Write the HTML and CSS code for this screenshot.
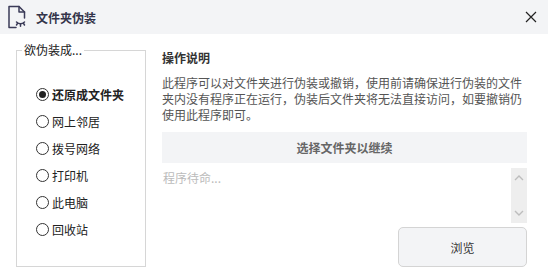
FILE: index.html
```html
<!DOCTYPE html>
<html lang="zh-CN">
<head>
<meta charset="utf-8">
<title>文件夹伪装</title>
<link rel="stylesheet" href="styles.css">
</head>
<body>
<div class="window">
  <div class="titlebar">
    <svg class="app-icon" width="20" height="24" viewBox="0 0 20 24" fill="none" stroke="#3b3b58" stroke-width="1.5" stroke-linejoin="round" stroke-linecap="round">
      <path d="M9 22.5 H2 V1.5 H12 L17.5 7 V13"/>
      <path d="M12 1.5 V7 H17.5"/>
      <path d="M9.5 17 Q13.5 20.5 17.5 17"/>
      <path d="M10.5 18.3 L9.5 20"/>
      <path d="M13.5 19.4 L13.5 21.2"/>
      <path d="M16.5 18.3 L17.5 20"/>
    </svg>
    <span class="title">文件夹伪装</span>
    <svg class="close" width="12" height="12" viewBox="0 0 12 12" stroke="#222" stroke-width="1.2">
      <path d="M1 1 L11 11 M11 1 L1 11"/>
    </svg>
  </div>
  <div class="content">
    <fieldset class="group">
      <legend>欲伪装成...</legend>
      <div class="options">
        <label class="opt checked"><span class="radio"></span>还原成文件夹</label>
        <label class="opt"><span class="radio"></span>网上邻居</label>
        <label class="opt"><span class="radio"></span>拨号网络</label>
        <label class="opt"><span class="radio"></span>打印机</label>
        <label class="opt"><span class="radio"></span>此电脑</label>
        <label class="opt"><span class="radio"></span>回收站</label>
      </div>
    </fieldset>
    <div class="side">
      <div class="heading">操作说明</div>
      <p class="desc">此程序可以对文件夹进行伪装或撤销，使用前请确保进行伪装的文件夹内没有程序正在运行，伪装后文件夹将无法直接访问，如要撤销仍使用此程序即可。</p>
      <div class="bar">选择文件夹以继续</div>
      <div class="log">
        <div class="log-text">程序待命...</div>
        <div class="scroll">
          <svg width="10" height="6" viewBox="0 0 10 6" fill="none" stroke="#bdbdbd" stroke-width="1.4"><path d="M1 5 L5 1 L9 5"/></svg>
          <svg width="10" height="6" viewBox="0 0 10 6" fill="none" stroke="#bdbdbd" stroke-width="1.4"><path d="M1 1 L5 5 L9 1"/></svg>
        </div>
      </div>
      <div class="actions">
        <button class="browse">浏览</button>
      </div>
    </div>
  </div>
</div>
</body>
</html>
```

FILE: styles.css
```css
* { box-sizing: border-box; }
html, body {
  margin: 0;
  padding: 0;
  background: #ffffff;
}
body {
  font-family: "Noto Sans CJK SC", "Noto Sans", sans-serif;
  font-size: 12px;
  color: #333;
}
.window {
  width: 548px;
  height: 280px;
  overflow: hidden;
}
.titlebar {
  height: 34px;
  background: #f3f4f6;
  display: flex;
  align-items: center;
  padding: 0 11px 0 7px;
}
.app-icon { flex: none; }
.title {
  margin-left: 9px;
  font-weight: bold;
  font-size: 12px;
  color: #34344a;
  flex: 1;
}
.close { flex: none; }
.content {
  display: flex;
  padding: 8px 21px 0 16px;
}
.group {
  flex: none;
  width: 130px;
  height: 225px;
  margin: 0;
  padding: 0 0 0 0;
  border: 1px solid #d6d6d6;
}
.group legend {
  margin-left: 5px;
  padding: 0 2px;
  font-size: 12px;
  line-height: 16px;
  color: #222;
}
.options {
  display: flex;
  flex-direction: column;
  padding: 23px 0 0 19px;
}
.opt {
  height: 27px;
  display: flex;
  align-items: center;
  color: #222;
  font-size: 12px;
}
.opt.checked { font-weight: bold; }
.radio {
  width: 13px;
  height: 13px;
  border: 1px solid #333;
  border-radius: 50%;
  margin-right: 3px;
  display: flex;
  align-items: center;
  justify-content: center;
  background: #fff;
}
.opt.checked .radio::after {
  content: "";
  width: 7px;
  height: 7px;
  border-radius: 50%;
  background: #222;
}
.side {
  flex: 1;
  margin-left: 16px;
  display: flex;
  flex-direction: column;
  padding-top: 8px;
}
.heading {
  font-weight: bold;
  line-height: 16px;
  color: #333;
}
.desc {
  margin: 9px 0 0 0;
  line-height: 16px;
  color: #555;
}
.bar {
  margin-top: 9px;
  height: 31px;
  background: #f3f4f6;
  display: flex;
  align-items: center;
  justify-content: center;
  font-weight: bold;
  color: #666;
}
.log {
  margin-top: 5px;
  height: 55px;
  display: flex;
}
.log-text {
  flex: 1;
  color: #bbbbbb;
  line-height: 16px;
  padding: 2px 0 0 1px;
}
.scroll {
  width: 16px;
  background: #eeeeee;
  display: flex;
  flex-direction: column;
  align-items: center;
  justify-content: space-between;
  padding: 7px 0 7px 0;
}
.actions {
  display: flex;
  justify-content: flex-end;
  margin-top: 4px;
}
.browse {
  width: 129px;
  height: 40px;
  border: 1px solid #d4d4d4;
  border-radius: 5px;
  background: #f3f4f6;
  font-family: "Noto Sans CJK SC", "Noto Sans", sans-serif;
  font-size: 12px;
  color: #333;
}
```
